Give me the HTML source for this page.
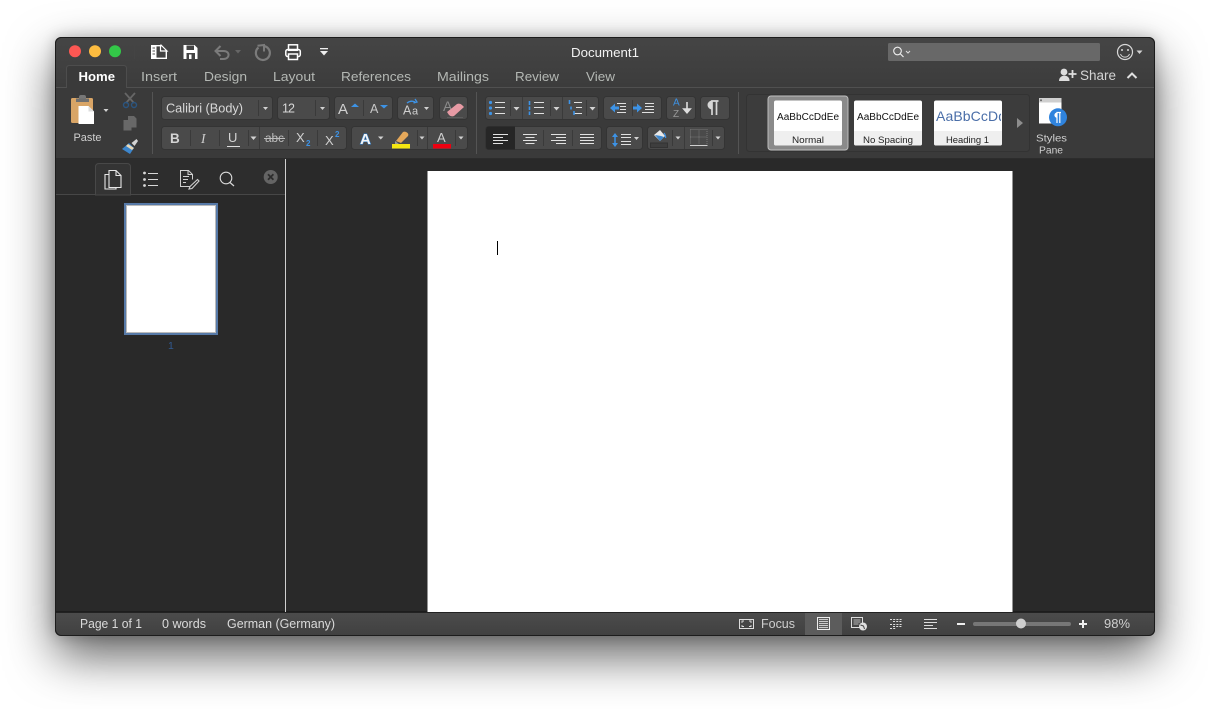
<!DOCTYPE html>
<html><head><meta charset="utf-8"><title>Document1</title>
<style>
html,body{margin:0;padding:0;width:1210px;height:709px;overflow:hidden;background:#fff}
#win{position:absolute;left:55px;top:37px;width:1100px;height:599px;border-radius:6px;background:#292929;box-shadow:0 20px 48px rgba(0,0,0,.62),0 0 14px rgba(0,0,0,.22)}
svg{position:absolute;left:0;top:0}
text{font-family:"Liberation Sans",sans-serif;fill:#d8d8d8;font-size:12.5px}
.t{fill:#b4b8b4;font-size:13px}
.g{fill:#4a4a4a;stroke:#343434;stroke-width:1}
.s{stroke:#3a3a3a;stroke-width:1}
.a{fill:#d2d2d2}
.b{fill:#3d93e6}
</style></head><body>
<div id="win"></div>
<svg width="1210" height="709" viewBox="0 0 1210 709">
<defs>
<linearGradient id="tb" x1="0" y1="0" x2="0" y2="1"><stop offset="0" stop-color="#454545"/><stop offset="1" stop-color="#3c3c3c"/></linearGradient>
<linearGradient id="sb" x1="0" y1="0" x2="0" y2="1"><stop offset="0" stop-color="#4c4c4c"/><stop offset="1" stop-color="#404040"/></linearGradient>
<clipPath id="wc"><rect x="55.5" y="37.5" width="1099" height="598" rx="6"/></clipPath>
</defs>
<g clip-path="url(#wc)">
<rect x="55" y="37" width="1100" height="599" fill="#292929"/>
<rect x="55" y="37" width="1100" height="50" fill="url(#tb)"/>
<rect x="55" y="87" width="1100" height="72" fill="#3a3a3a"/>
<line x1="55" y1="87.5" x2="1155" y2="87.5" stroke="#505050"/>
<rect x="55" y="158" width="1100" height="1" fill="#2c2c2c"/>
<!-- status -->
<rect x="55" y="612" width="1100" height="24" fill="url(#sb)"/>
<rect x="55" y="611.500" width="1100" height="1.200" fill="#111"/>
<rect x="805" y="613" width="37" height="23" fill="#5c5c5c"/>
<!-- sidebar -->
<rect x="56" y="159" width="229" height="36" fill="#2d2d2d"/>
<line x1="56" y1="194.500" x2="285" y2="194.500" stroke="#474747"/>
<path d="M95.500 195V167q0-3.500 3.500-3.500h28q3.500 0 3.500 3.500v28z" fill="#343434" stroke="#484848"/>
<line x1="285.500" y1="159" x2="285.500" y2="612" stroke="#cfcfcf"/>
</g>
<rect x="55.500" y="37.500" width="1099" height="598" rx="6" fill="none" stroke="#1c1c1c"/>
<!-- traffic -->
<circle cx="75" cy="51.300" r="6" fill="#fc5753"/><circle cx="95" cy="51.300" r="6" fill="#fdbc40"/><circle cx="115" cy="51.300" r="6" fill="#33c748"/>
<line x1="134.500" y1="44" x2="134.500" y2="59" stroke="#444"/>
<!-- QAT -->
<rect x="151.700" y="45.700" width="14.600" height="12.600" fill="none" stroke="#fff" stroke-width="1.400"/><rect x="151" y="45" width="5.500" height="14" fill="#fff"/><path d="M152.500 48h2.500M152.500 51h2.500M152.500 54h2.500" stroke="#555"/><path d="M161 45h6v6z" fill="#444"/><path d="M160.500 46v5h5.500l1 0-6-6z" fill="none" stroke="#fff" stroke-width="1.200"/>
<path d="M183.500 45h11l3 3v11h-14z" fill="#fff"/><rect x="186.500" y="45.500" width="7.500" height="4.500" fill="#444"/><rect x="186.500" y="53" width="8.500" height="6" fill="#444"/><rect x="189" y="54.500" width="2.500" height="4.500" fill="#fff"/>
<path d="M220.500 46l-5 5 5 5M216 51h7.500c7 0 6.500 8 0 8H220" fill="none" stroke="#7b7b7b" stroke-width="2"/>
<path d="M235 50h6l-3 3.500z" fill="#666"/>
<path d="M258.500 47.500a7 7 0 1 0 5-1.500" fill="none" stroke="#7b7b7b" stroke-width="2.200"/><path d="M257.500 45.800l6.500-.8v6.500" fill="none" stroke="#7b7b7b" stroke-width="2"/>
<rect x="288.500" y="44.800" width="9" height="5.500" fill="none" stroke="#fff" stroke-width="1.500"/><rect x="285.800" y="49.500" width="14.500" height="7" rx="2" fill="none" stroke="#fff" stroke-width="1.500"/><rect x="288.500" y="54" width="9" height="5.500" fill="#444" stroke="#fff" stroke-width="1.500"/>
<rect x="320" y="48" width="8" height="1.300" fill="#eee"/><path d="M320 51h8l-4 4.500z" fill="#eee"/>
<text x="571" y="57" textLength="68" lengthAdjust="spacingAndGlyphs" style="fill:#f2f2f2;font-size:13px">Document1</text>
<!-- search -->
<rect x="888" y="43" width="212" height="18" rx="1.500" fill="#686868"/>
<circle cx="897.500" cy="51" r="3.800" fill="none" stroke="#eee" stroke-width="1.100"/><path d="M900.500 54l3 3" stroke="#eee" stroke-width="1.200"/><path d="M906 51l2 2 2-2" fill="none" stroke="#ddd"/>
<circle cx="1125" cy="52" r="7.500" fill="none" stroke="#d8d8d8" stroke-width="1.200"/><circle cx="1122" cy="50" r="1" fill="#d8d8d8"/><circle cx="1128" cy="50" r="1" fill="#d8d8d8"/><path d="M1120.500 54a4.800 4.800 0 0 0 9 0" fill="none" stroke="#d8d8d8"/>
<path d="M1136.500 50.500h6l-3 3.500z" class="a"/>
<!-- tabs -->
<path d="M66.500 87.500V68.500q0-3 3-3h54q3 0 3 3v19" fill="#3a3a3a" stroke="#4d4d4d"/>
<rect x="67" y="86" width="59" height="3" fill="#3a3a3a"/>
<text x="78.500" y="81" textLength="36.500" lengthAdjust="spacingAndGlyphs" style="fill:#fff;font-weight:bold;font-size:13px">Home</text>
<text class="t" x="141" y="81" textLength="36" lengthAdjust="spacingAndGlyphs">Insert</text>
<text class="t" x="204" y="81" textLength="43" lengthAdjust="spacingAndGlyphs">Design</text>
<text class="t" x="273" y="81" textLength="42" lengthAdjust="spacingAndGlyphs">Layout</text>
<text class="t" x="341" y="81" textLength="70" lengthAdjust="spacingAndGlyphs">References</text>
<text class="t" x="437" y="81" textLength="52" lengthAdjust="spacingAndGlyphs">Mailings</text>
<text class="t" x="515" y="81" textLength="44" lengthAdjust="spacingAndGlyphs">Review</text>
<text class="t" x="586" y="81" textLength="29" lengthAdjust="spacingAndGlyphs">View</text>
<!-- share -->
<circle cx="1064" cy="72" r="3.400" fill="#ddd"/><path d="M1059 81c0-7 10-7 10.500-1v1z" fill="#ddd"/><path d="M1072.500 70v8M1068.500 74h8" stroke="#ddd" stroke-width="1.800"/>
<text x="1080" y="80" textLength="36" lengthAdjust="spacingAndGlyphs" style="fill:#d4d4d4;font-size:13.500px">Share</text>
<path d="M1127.500 78l4.500-4.500 4.500 4.500" fill="none" stroke="#e0e0e0" stroke-width="2"/>
<!-- clipboard -->
<rect x="71" y="98" width="22" height="25" rx="1.500" fill="#d9a566"/><rect x="79" y="95" width="7" height="6" rx="2" fill="#777"/><rect x="76" y="98.500" width="13" height="3.500" fill="#6f6f6f"/>
<path d="M78.500 106h10l5.500 5.500v12.500h-15.500z" fill="#fff"/><path d="M88.500 106v5.500h5.500" fill="#ddd"/>
<path d="M103.500 109h5l-2.500 3z" class="a"/>
<text x="73.500" y="141" textLength="28" lengthAdjust="spacingAndGlyphs" style="font-size:11px;fill:#d0d0d0">Paste</text>
<!-- scissors -->
<path d="M125 93l9 10M135 93l-9 10" stroke="#666" stroke-width="1.800"/><circle cx="126" cy="105" r="2.500" fill="none" stroke="#2b5580" stroke-width="1.400"/><circle cx="134" cy="105" r="2.500" fill="none" stroke="#2b5580" stroke-width="1.400"/>
<path d="M128 116h6l2.500 2.500v9h-5v3h-8v-10.500h4.500z" fill="#686868"/>
<path d="M131.500 143l5-4 1.500 2-3.500 5z" fill="#d4d4d4"/><path d="M122 149l7-6 5 5-4 6z" fill="#3d86cc"/><path d="M128 144l6 4-2 2-6-4z" fill="#e8d8b8"/>
<line x1="152.500" y1="92" x2="152.500" y2="154" stroke="#545454"/><line x1="476.500" y1="92" x2="476.500" y2="154" stroke="#545454"/><line x1="738.500" y1="92" x2="738.500" y2="154" stroke="#545454"/>
<!-- row 1 groups -->
<rect class="g" x="161.500" y="96.500" width="111" height="23" rx="3"/><line class="s" x1="258.500" y1="100" x2="258.500" y2="116"/><path d="M263 107h5l-2.500 3z" class="a"/>
<text x="166" y="112.500" textLength="77" lengthAdjust="spacingAndGlyphs" style="font-size:12.500px">Calibri (Body)</text>
<rect class="g" x="277.500" y="96.500" width="52" height="23" rx="3"/><line class="s" x1="315.500" y1="100" x2="315.500" y2="116"/><path d="M320 107h5l-2.500 3z" class="a"/>
<text x="282" y="112.500" textLength="13" style="font-size:12.500px">12</text>
<rect class="g" x="334.500" y="96.500" width="58" height="23" rx="3"/><line class="s" x1="363.500" y1="100" x2="363.500" y2="116"/>
<text x="338" y="114" style="font-size:15px;fill:#d0d0d0">A</text><path d="M351 107l4-3.500 4 3.500z" class="b"/>
<text x="370" y="113" style="font-size:12.500px;fill:#c8c8c8">A</text><path d="M380 105h8l-4 3.500z" class="b"/>
<rect class="g" x="397.500" y="96.500" width="36" height="23" rx="3"/>
<text x="403" y="114.500" style="font-size:12.500px;fill:#cfcfcf">A</text><text x="412" y="114.500" style="font-size:11px;fill:#cfcfcf">a</text>
<path d="M407 103q4-3 8-1M415 99l2 3-3.500 1" fill="none" stroke="#3d93e6" stroke-width="1.300"/><path d="M424 107h5l-2.500 3z" class="a"/>
<rect class="g" x="439.500" y="96.500" width="28" height="23" rx="3"/>
<text x="443" y="111" style="font-size:14px;fill:#8c8c8c">A</text><path d="M447 112l10-8q3-1 5 1l2 2-10 9q-3 1-5-1z" fill="#e79aa4"/><path d="M447 117.500h16" stroke="#5c5c5c"/>
<!-- bullets -->
<rect class="g" x="485.500" y="96.500" width="113" height="23" rx="3"/>
<line class="s" x1="510.500" y1="100" x2="510.500" y2="116"/><line class="s" x1="522.500" y1="97" x2="522.500" y2="119"/><line class="s" x1="550.500" y1="100" x2="550.500" y2="116"/><line class="s" x1="562.500" y1="97" x2="562.500" y2="119"/><line class="s" x1="586.500" y1="100" x2="586.500" y2="116"/>
<circle cx="490.500" cy="102.500" r="1.600" class="b"/><circle cx="490.500" cy="108" r="1.600" class="b"/><circle cx="490.500" cy="113.500" r="1.600" class="b"/>
<path d="M495 102.500h10M495 107.500h10M495 113.500h10M534 102.500h10M534 107.500h10M534 113.500h10M574 102.500h8M576 107.500h6M574 113.500h8" stroke="#e0e0e0" stroke-width="1.100"/>
<path d="M529.500 101v4M529.500 106.500v3.500M529.500 111.500v3.500M569.500 100v4M571 106.500v3M574 111v4" stroke="#3d93e6" stroke-width="1.600"/>
<path d="M513.500 107h6l-3 3.500zM553.500 107h6l-3 3.500zM589.500 107h6l-3 3.500z" class="a"/>
<!-- indent -->
<rect class="g" x="603.500" y="96.500" width="58" height="23" rx="3"/><line class="s" x1="632.500" y1="100" x2="632.500" y2="116"/>
<path d="M610 108l5-4.500v3h4v3h-4v3zM642 108l-5-4.500v3h-4v3h4v3z" class="b"/>
<path d="M617 103.500h9M620 106.500h6M620 109.500h6M617 112.500h9M645 103.500h9M645 106.500h9M645 109.500h9M642 112.500h12" stroke="#e0e0e0"/>
<!-- sort -->
<rect class="g" x="666.500" y="96.500" width="29" height="23" rx="3"/>
<text x="673" y="105.500" style="font-size:10px;fill:#3d93e6">A</text><text x="673" y="117" style="font-size:10px;fill:#999">Z</text>
<path d="M687 102v10M683.800 109l3.200 3.800 3.200-3.800z" stroke="#ddd" stroke-width="1.600" fill="#ddd"/>
<rect class="g" x="700.500" y="96.500" width="29" height="23" rx="3"/>
<path d="M712 115v-14h6.500M716.500 101v14" fill="none" stroke="#d6d6d6" stroke-width="1.700"/><path d="M712 101a3.500 3.500 0 0 0 0 8z" fill="#d6d6d6" stroke="#d6d6d6"/>
<!-- row 2 -->
<rect class="g" x="161.500" y="126.500" width="185" height="23" rx="3"/>
<path d="M190.500 130v16M219.500 130v16M248.500 130v16M259.500 127v22M288.500 130v16M317.500 130v16" class="s"/>
<text x="170" y="143" style="font-weight:bold;font-size:13.500px;fill:#d4d4d4">B</text>
<text x="201" y="143" style="font-style:italic;font-size:13.500px;fill:#cfcfcf;font-family:'Liberation Serif',serif">I</text>
<text x="228" y="142" style="font-size:13px;fill:#d4d4d4">U</text><path d="M227 146.500h13" stroke="#ddd"/>
<path d="M250.500 136.500h6l-3 3.500z" class="a"/>
<text x="265" y="142" textLength="19" lengthAdjust="spacingAndGlyphs" style="font-size:11.500px;fill:#bdbdbd">abc</text><path d="M264 138.500h21" stroke="#bdbdbd"/>
<text x="296" y="142" style="font-size:13px;fill:#d0d0d0">X</text><text x="306" y="146" style="font-size:8px;fill:#3d93e6;font-weight:bold">2</text>
<text x="325" y="145" style="font-size:13px;fill:#d0d0d0">X</text><text x="335" y="137" style="font-size:8px;fill:#3d93e6;font-weight:bold">2</text>
<rect class="g" x="351.500" y="126.500" width="116" height="23" rx="3"/>
<path d="M417.500 130v16M427.500 127v22M455.500 130v16" class="s"/>
<text x="360" y="144" style="font-size:15px;font-weight:bold;fill:#f4f4f4;stroke:#2d7fd0;stroke-width:1;paint-order:stroke">A</text>
<path d="M378 136.500h5.500l-2.750 3zM419.500 136.500h5l-2.500 3zM458.500 136.500h5l-2.500 3z" class="a"/>
<path d="M396 141l7-9q2-1 4 .5t1 3.500l-7 7z" fill="#e5a85a"/><path d="M395 141l4 3-4 0z" fill="#999"/>
<rect x="392" y="144" width="18" height="4.500" fill="#f6e711"/>
<text x="437" y="142" style="font-size:13px;fill:#cfcfcf">A</text><rect x="433" y="144" width="18" height="4.500" fill="#ee0010"/>
<!-- align -->
<rect class="g" x="485.500" y="126.500" width="116" height="23" rx="3"/>
<path d="M486 129.500q0-3 3-3h26v23h-26q-3 0-3-3z" fill="#262626"/>
<path d="M543.500 130v16M572.500 130v16" class="s"/>
<path d="M493 134.500h15M493 137.500h10M493 140.500h15M493 143.500h10" stroke="#e2e2e2"/>
<path d="M523 134.500h14M525.500 137.500h9M523 140.500h14M525.500 143.500h9" stroke="#e2e2e2"/>
<path d="M551 134.500h15M556 137.500h10M551 140.500h15M556 143.500h10" stroke="#e2e2e2"/>
<path d="M580 134.500h14M580 137.500h14M580 140.500h14M580 143.500h14" stroke="#e2e2e2"/>
<rect class="g" x="606.500" y="126.500" width="36" height="23" rx="3"/>
<path d="M615 133l-3 4h6zM615 147l-3-4h6z" class="b"/><path d="M615 136v8" stroke="#3d93e6" stroke-width="1.500"/>
<path d="M621 134.500h10M621 137.500h10M621 141.500h10M621 144.500h10" stroke="#e0e0e0"/><path d="M634 137h5l-2.500 3z" class="a"/>
<rect class="g" x="647.500" y="126.500" width="77" height="23" rx="3"/>
<path d="M672.500 130v16M684.500 127v22M712.500 130v16" class="s"/>
<path d="M654 135l6-5 5 6-5 5z" fill="#e8e8e8"/><path d="M655 135l6 1 3 1-4 4z" fill="#3d86cc"/><path d="M664 133q2 3 1.500 5" stroke="#3d93e6" fill="none" stroke-width="1.300"/>
<rect x="650.500" y="143" width="17" height="4.500" fill="#3e3e3e" stroke="#333"/>
<path d="M675.500 136.500h5l-2.500 3zM715.500 136.500h5l-2.500 3z" class="a"/>
<path d="M690.500 129.500h16.500v14.500M690.500 129.500v14.500M699 129.500v14.500M690.500 137h16.500" fill="none" stroke="#777" stroke-dasharray="1 1"/><path d="M690 145.500h17.500" stroke="#cfcfcf"/>
<!-- style gallery -->
<rect x="746.500" y="94.500" width="283" height="57" rx="3" fill="#3c3c3c" stroke="#333"/>
<rect x="768" y="96" width="80" height="54" rx="3" fill="#8a8a8a" stroke="#bdbdbd"/>
<rect x="774" y="100.500" width="68" height="45" rx="2" fill="#fff"/><path d="M774 131h68v12.500q0 2-2 2h-64q-2 0-2-2z" fill="#efefef"/>
<rect x="854" y="100.500" width="68" height="45" rx="2" fill="#fff"/><path d="M854 131h68v12.500q0 2-2 2h-64q-2 0-2-2z" fill="#efefef"/>
<rect x="934" y="100.500" width="68" height="45" rx="2" fill="#fff"/><path d="M934 131h68v12.500q0 2-2 2h-64q-2 0-2-2z" fill="#efefef"/>
<text x="777" y="120" textLength="62" style="font-size:10px;fill:#111">AaBbCcDdEe</text>
<text x="857" y="120" textLength="62" style="font-size:10px;fill:#111">AaBbCcDdEe</text>
<svg x="934" y="100" width="67" height="30"><text x="2" y="21" textLength="70" style="font-size:14px;fill:#4a6ea8">AaBbCcDd</text></svg>
<text x="792" y="143" textLength="32" lengthAdjust="spacingAndGlyphs" style="font-size:9.500px;fill:#222">Normal</text>
<text x="863" y="143" textLength="50" lengthAdjust="spacingAndGlyphs" style="font-size:9.500px;fill:#222">No Spacing</text>
<text x="946" y="143" textLength="43" lengthAdjust="spacingAndGlyphs" style="font-size:9.500px;fill:#222">Heading 1</text>
<path d="M1017 118l6 5-6 5z" fill="#8d8d8d"/>
<!-- styles pane -->
<rect x="1039" y="98" width="22.500" height="25.500" fill="#fff"/><rect x="1039" y="98" width="22.500" height="4.500" fill="#cfcfcf"/><circle cx="1041" cy="100.200" r="1" fill="#666"/>
<circle cx="1058" cy="117.300" r="9" fill="#2f83dd"/>
<path d="M1057 123v-10.500h4M1059.800 112.500v10.500" fill="none" stroke="#fff" stroke-width="1.200"/><path d="M1057 112.500a2.600 2.600 0 0 0 0 5.200z" fill="#fff"/>
<text x="1036" y="141.500" textLength="31" lengthAdjust="spacingAndGlyphs" style="font-size:10.500px;fill:#cfcfcf">Styles</text>
<text x="1039" y="153.500" textLength="24" lengthAdjust="spacingAndGlyphs" style="font-size:10.500px;fill:#cfcfcf">Pane</text>
<!-- nav icons -->
<path d="M109 170.500h7l5 5v12h-12zM116 170.500v5h5" fill="none" stroke="#e6e6e6" stroke-width="1.100"/><path d="M109 174.500h-4v14.500h11v-1.500" fill="none" stroke="#e6e6e6" stroke-width="1.100"/>
<circle cx="144.500" cy="173" r="1.400" fill="#d8d8d8"/><circle cx="144.500" cy="179.500" r="1.400" fill="#d8d8d8"/><circle cx="144.500" cy="185.500" r="1.400" fill="#d8d8d8"/>
<path d="M148 173.500h10M148 179.500h10M148 185.500h10" stroke="#d8d8d8" stroke-width="1.100"/>
<path d="M190 186.500h-9.500v-16h8l4 4v5M188 170.500v4h4.500M183 176.500h6M183 179.500h5M183 182.500h3" fill="none" stroke="#d0d0d0"/><path d="M190 186.500l7.500-7 1.500 1.500-7 7.500-3 .5z" fill="none" stroke="#d0d0d0" stroke-width="1.100"/>
<circle cx="226" cy="178" r="5.800" fill="none" stroke="#d8d8d8" stroke-width="1.100"/><path d="M230 182.500l4 3.500" stroke="#d8d8d8" stroke-width="1.200"/>
<circle cx="270.700" cy="177" r="7" fill="#646464"/><path d="M268 174.300l5.400 5.400M273.400 174.300l-5.400 5.400" stroke="#2c2c2c" stroke-width="1.800"/>
<!-- thumb -->
<rect x="125" y="204" width="92" height="130" fill="#fff" stroke="#577aa8" stroke-width="2"/>
<rect x="126.500" y="205.500" width="89" height="127" fill="none" stroke="#bbb" stroke-width="1"/>
<text x="168" y="349" style="font-size:10.500px;fill:#315a90">1</text>
<!-- page -->
<rect x="427.500" y="171" width="585" height="441" fill="#fff"/>
<rect x="497" y="241" width="1" height="14" fill="#000"/>
<!-- status text -->
<text x="80" y="628" textLength="62" lengthAdjust="spacingAndGlyphs" style="font-size:12.500px;fill:#dadada">Page 1 of 1</text>
<text x="162" y="628" textLength="44" lengthAdjust="spacingAndGlyphs" style="font-size:12.500px;fill:#dadada">0 words</text>
<text x="227" y="628" textLength="108" lengthAdjust="spacingAndGlyphs" style="font-size:12.500px;fill:#dadada">German (Germany)</text>
<rect x="739.500" y="619.500" width="14" height="9" fill="none" stroke="#ddd"/><path d="M742 623v-2h2M751 623v-2h-2M742 625v1.500h2M751 625v1.500h-2" fill="none" stroke="#ddd" stroke-width=".9"/>
<text x="761" y="628" textLength="34" lengthAdjust="spacingAndGlyphs" style="font-size:12.500px;fill:#cfcfcf">Focus</text>
<rect x="817.500" y="617.500" width="12" height="12" fill="none" stroke="#eee"/><path d="M819 619.500h9M819 621.500h9M819 623.500h9M819 625.500h9M819 627.500h9" stroke="#eee" stroke-width=".8"/>
<rect x="851.500" y="617.500" width="11" height="10" fill="none" stroke="#ddd"/><path d="M853.500 620h7M853.500 622h7M853.500 624h5" stroke="#ddd" stroke-width=".8"/><circle cx="863" cy="626.500" r="4" fill="#e0e0e0"/><path d="M860.500 625l3 1 1 3" stroke="#444" fill="none"/>
<path d="M890 619.500h12M893 621.500h9M890 624.500h12M893 626.500h9M890 628.500h6" stroke="#ddd" stroke-dasharray="2 1.200"/>
<path d="M924 619.500h13M924 622.500h13M924 625.500h9M924 628.500h13" stroke="#ddd"/>
<rect x="957" y="623" width="8" height="2" fill="#eee"/>
<rect x="973" y="622" width="98" height="4" rx="2" fill="#777"/>
<circle cx="1021" cy="623.500" r="5" fill="#cfcfcf"/>
<path d="M1079 624h8M1083 620v8" stroke="#eee" stroke-width="2"/>
<text x="1104" y="628" textLength="26" lengthAdjust="spacingAndGlyphs" style="font-size:12.500px;fill:#cfcfcf">98%</text>
</svg>
</body></html>
